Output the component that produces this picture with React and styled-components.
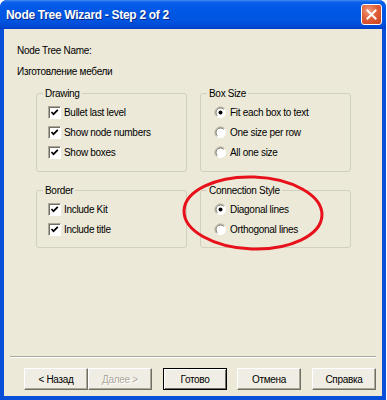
import React from "react"
import styled, { createGlobalStyle } from "styled-components"

const GlobalStyle = createGlobalStyle`
    body {
        margin: 0;
        background: #ffffff;
    }
`

const Window = styled.div`
    position: relative;
    width: 386px;
    height: 400px;
    display: flex;
    flex-direction: column;
    background: #0a4fd8;
    border-radius: 7px 7px 0 0;
    font-family: "Liberation Sans", Arial, sans-serif;
    font-size: 10px;
    letter-spacing: -0.3px;
    color: #000;
    box-sizing: border-box;
`

const TitleBar = styled.div`
    height: 29px;
    flex: none;
    display: flex;
    align-items: center;
    justify-content: space-between;
    padding: 0 4px 0 6px;
    border-radius: 7px 7px 0 0;
    background: linear-gradient(to bottom, #3f8cf3 0%, #0a5fea 8%, #0058e6 30%, #0055e0 70%, #0049d4 92%, #003cc4 100%);
`

const Title = styled.span`
    font-family: "Liberation Sans", Arial, sans-serif;
    font-weight: bold;
    font-size: 12px;
    letter-spacing: -0.3px;
    color: #ffffff;
    text-shadow: 1px 1px 0 #0a2a8a;
`

const CloseButton = styled.div`
    width: 19px;
    height: 19px;
    border: 1px solid #ffffff;
    border-radius: 3px;
    display: flex;
    align-items: center;
    justify-content: center;
    background: radial-gradient(circle at 35% 30%, #f39a7c 0%, #e0603a 45%, #c8401c 100%);
`

const Body = styled.div`
    flex: 1;
    margin: 0 4px 4px 4px;
    background: #ece9d8;
    display: flex;
    flex-direction: column;
`

const NameBlock = styled.div`
    padding: 15px 0 0 13px;
    display: flex;
    flex-direction: column;
    gap: 8px;
    line-height: 13px;
`

const Groups = styled.div`
    margin: 15px 0 0 32px;
    display: grid;
    grid-template-columns: 151px 151px;
    column-gap: 13px;
    row-gap: 18px;
`

const GroupBox = styled.div`
    position: relative;
    border: 1px solid #d0d0bf;
    border-radius: 3px;
    padding: 8px 0 ${p => p.$bottom}px ${p => p.$indent}px;
    display: flex;
    flex-direction: column;
`

const Legend = styled.span`
    position: absolute;
    top: -7px;
    left: 6px;
    padding: 0 2px;
    background: #ece9d8;
    line-height: 13px;
`

const Row = styled.label`
    height: 20px;
    display: flex;
    align-items: center;
    gap: 3px;
`

const CheckBox = styled.span`
    width: 11px;
    height: 11px;
    background: #ffffff;
    border: 1px solid;
    border-color: #aca899 #ffffff #ffffff #aca899;
    box-shadow: inset 1px 1px 0 #716f64;
    display: flex;
    align-items: center;
    justify-content: center;
`

const Separator = styled.div`
    margin: auto 6px 0 6px;
    border-top: 1px solid #aca899;
    border-bottom: 1px solid #ffffff;
`

const ButtonRow = styled.div`
    display: flex;
    padding: 10px 0 6px 20px;
`

const Button = styled.div`
    width: 64px;
    height: 22px;
    box-sizing: border-box;
    margin-left: ${p => p.$gap || 0}px;
    display: flex;
    align-items: center;
    justify-content: center;
    background: #f0eee4;
    border: 1px solid;
    border-color: ${p => p.$default ? "#000000" : "#ffffff #716f64 #716f64 #ffffff"};
    box-shadow: ${p => p.$default ? "inset 1px 1px 0 #ffffff, inset -1px -1px 0 #716f64" : "inset -1px -1px 0 #aca899"};
    color: ${p => p.$disabled ? "#aca899" : "#000000"};
    text-shadow: ${p => p.$disabled ? "1px 1px 0 #ffffff" : "none"};
`

const Ellipse = styled.svg`
    position: absolute;
    left: 180px;
    top: 174px;
    pointer-events: none;
`

function Check({ label }) {
    return (
        <Row>
            <CheckBox>
                <svg width="9" height="9" viewBox="0 0 9 9">
                    <polyline points="1.5,4 3.5,6.2 7.8,1.8" fill="none" stroke="#000" strokeWidth="1.7" />
                </svg>
            </CheckBox>
            {label}
        </Row>
    )
}

function Radio({ label, checked }) {
    return (
        <Row>
            <svg width="13" height="13" viewBox="0 0 13 13">
                <circle cx="6.5" cy="6.5" r="5.5" fill="#ffffff" />
                <path d="M2.6 10.4 A5.5 5.5 0 0 1 10.4 2.6" fill="none" stroke="#aca899" strokeWidth="1" />
                <path d="M3.3 9.7 A4.5 4.5 0 0 1 9.7 3.3" fill="none" stroke="#716f64" strokeWidth="1" />
                {checked && <circle cx="6.5" cy="6.5" r="2" fill="#000" />}
            </svg>
            {label}
        </Row>
    )
}

export default function App() {
    return (
        <>
            <GlobalStyle />
            <Window>
                <TitleBar>
                    <Title>Node Tree Wizard - Step 2 of 2</Title>
                    <CloseButton>
                        <svg width="11" height="11" viewBox="0 0 11 11">
                            <path d="M1.5 1.5 L9.5 9.5 M9.5 1.5 L1.5 9.5" stroke="#fff" strokeWidth="2" strokeLinecap="square" />
                        </svg>
                    </CloseButton>
                </TitleBar>
                <Body>
                    <NameBlock>
                        <span>Node Tree Name:</span>
                        <span>Изготовление мебели</span>
                    </NameBlock>
                    <Groups>
                        <GroupBox $indent={11} $bottom={9}>
                            <Legend>Drawing</Legend>
                            <Check label="Bullet last level" />
                            <Check label="Show node numbers" />
                            <Check label="Show boxes" />
                        </GroupBox>
                        <GroupBox $indent={13} $bottom={9}>
                            <Legend>Box Size</Legend>
                            <Radio label="Fit each box to text" checked />
                            <Radio label="One size per row" />
                            <Radio label="All one size" />
                        </GroupBox>
                        <GroupBox $indent={11} $bottom={8}>
                            <Legend>Border</Legend>
                            <Check label="Include Kit" />
                            <Check label="Include title" />
                        </GroupBox>
                        <GroupBox $indent={13} $bottom={8}>
                            <Legend>Connection Style</Legend>
                            <Radio label="Diagonal lines" checked />
                            <Radio label="Orthogonal lines" />
                        </GroupBox>
                    </Groups>
                    <Separator />
                    <ButtonRow>
                        <Button>&lt; Назад</Button>
                        <Button $disabled>Далее &gt;</Button>
                        <Button $default $gap={11}>Готово</Button>
                        <Button $gap={10}>Отмена</Button>
                        <Button $gap={11}>Справка</Button>
                    </ButtonRow>
                </Body>
                <Ellipse width="150" height="80" viewBox="0 0 150 80">
                    <ellipse cx="73" cy="39" rx="69" ry="36" fill="none" stroke="#e8101a" strokeWidth="3" transform="rotate(2 73 39)" />
                </Ellipse>
            </Window>
        </>
    )
}
